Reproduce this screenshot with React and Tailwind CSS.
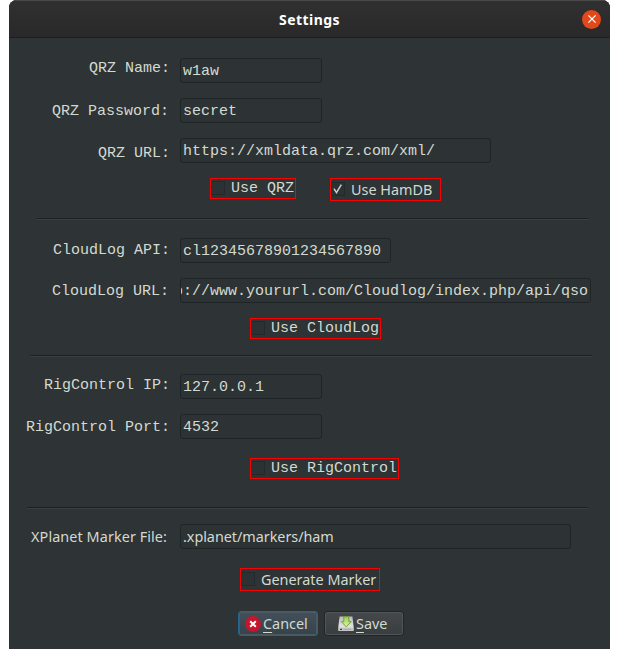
import React from 'react';

const MONO = "font-['Liberation_Mono',monospace] text-[15px] leading-[17px]";
const SANS = "font-['Noto_Sans',sans-serif] text-[14.4px] leading-[20px]";

function Row({ label, value, row, labelPos, labelFont = MONO, width, valuePos = 'pt-[4px] px-[2px]', valueFont = MONO, clipped = false }) {
  return (
    <div className={`flex h-[25px] items-start ${row}`}>
      <label className={`w-[161px] shrink-0 whitespace-nowrap text-right ${labelFont} ${labelPos}`}>{label}</label>
      <div className={`ml-[10px] flex h-[25px] shrink-0 overflow-hidden whitespace-nowrap rounded-[3px] border border-[#1f2426] bg-[#2d3335] ${clipped ? 'justify-end' : ''} ${width} ${valuePos} ${valueFont}`}>
        <span>{value}</span>
      </div>
    </div>
  );
}

function Check({ label, checked = false, box, font = MONO, boxPos = 'mt-[2px]' }) {
  return (
    <div className={`flex items-start border border-[#fa0000] ${box}`}>
      <span className={`flex h-[14px] w-[14px] shrink-0 items-center justify-center border border-[#24292b] bg-[#2c3234] ${boxPos}`}>
        {checked && (
          <svg viewBox="0 0 12 12" className="h-[12px] w-[12px]" fill="none" stroke="#c9d0cb" strokeWidth="1.5">
            <path d="M2 5.6 4.5 9.6 9.3 1.6" />
          </svg>
        )}
      </span>
      <span className={`ml-[6px] whitespace-nowrap pt-[1px] ${font}`}>{label}</span>
    </div>
  );
}

function Separator({ place }) {
  return <div className={`h-[2px] shrink-0 border-t border-b border-t-[#1d2123] border-b-[#3a4042] ${place}`} />;
}

function CancelIcon() {
  return (
    <svg viewBox="0 0 16 16" className="h-[16px] w-[16px] shrink-0">
      <circle cx="8" cy="8" r="7.9" fill="#c7162b" />
      <path d="M5.2 5.2 10.8 10.8M10.8 5.2 5.2 10.8" stroke="#fff" strokeWidth="2" />
    </svg>
  );
}

function SaveIcon() {
  return (
    <svg viewBox="0 0 16 16" className="h-[16px] w-[16px] shrink-0">
      <defs>
        <linearGradient id="disk" x1="0" y1="0" x2="0" y2="1">
          <stop offset="0" stopColor="#b9bbba" />
          <stop offset="1" stopColor="#f2f2f2" />
        </linearGradient>
        <linearGradient id="arrow" x1="0" y1="0" x2="0" y2="1">
          <stop offset="0" stopColor="#a3cf5c" />
          <stop offset="1" stopColor="#d9f2a8" />
        </linearGradient>
      </defs>
      <path d="M1.6 .6H14.4L15.6 10V14.2Q15.6 15 14.8 15H1.2Q.4 15 .4 14.2V10Z" fill="url(#disk)" />
      <path d="M.6 11.4H15.4V14.2Q15.4 14.9 14.7 14.9H1.3Q.6 14.9 .6 14.2Z" fill="#c4c5c4" />
      <path d="M2 13.3H4" stroke="#222" strokeWidth="1" />
      <path d="M5.5 13.3H13" stroke="#a5a7a5" strokeWidth="1" />
      <path d="M5.8 .8H10.8V5.6H13.2L8.3 10.9 3.4 5.6H5.8Z" fill="url(#arrow)" stroke="#6b9e25" strokeWidth=".9" />
    </svg>
  );
}

export default function App() {
  return (
    <div className="h-[658px] w-[619px] overflow-hidden bg-white px-[9px] text-[#d3dad0]">
      <div className="flex h-[649px] w-[601px] flex-col overflow-hidden rounded-t-[8px] bg-[#2e3335]">
        <header className="flex h-[38px] shrink-0 items-center border-b border-t border-b-[#1c1f20] border-t-[#494949] bg-[#2b2b2b] bg-linear-to-b from-[#303030] to-[#292929] pl-[28px] pr-[9px]">
          <h1 className="flex-1 pt-[1px] text-center font-['Noto_Sans',sans-serif] text-[14px] font-bold leading-[20px] tracking-[0.45px] text-white">
            Settings
          </h1>
          <button aria-label="Close" className="flex h-[19px] w-[19px] items-center justify-center rounded-full bg-[#e2481a]">
            <svg viewBox="0 0 10 10" className="h-[10px] w-[10px]" stroke="#fff" strokeWidth="1.3">
              <path d="M1.4 1.4 8.6 8.6M8.6 1.4 1.4 8.6" />
            </svg>
          </button>
        </header>

        <Row label="QRZ Name:" value="w1aw" row="mt-[20px]" labelPos="pt-[2px]" width="w-[142px]" />
        <Row label="QRZ Password:" value="secret" row="mt-[15px]" labelPos="pt-[5px] pr-[1px]" width="w-[142px]" />
        <Row label="QRZ URL:" value="https://xmldata.qrz.com/xml/" row="mt-[15px]" labelPos="pt-[7px]" width="w-[311px]" />
        <div className="mt-[15px] flex h-[23px] shrink-0 items-start gap-[34px] pl-[201px]">
          <Check label="Use QRZ" box="h-[21px] w-[86px]" />
          <Check label="Use HamDB" checked box="h-[23px] w-[111px]" font={SANS} boxPos="mt-[3px]" />
        </div>

        <Separator place="ml-[28px] mt-[17px] w-[551px]" />

        <Row label="CloudLog API:" value="cl12345678901234567890" row="mt-[18px]" labelPos="pt-[4px]" width="w-[211px]" />
        <Row
          label="CloudLog URL:"
          value="p://www.yoururl.com/Cloudlog/index.php/api/qso"
          row="mt-[15px]"
          labelPos="pt-[5px] pr-[1px]"
          width="w-[411px]"
          valuePos="pt-[4px] pr-[2px]"
          clipped
        />
        <div className="mt-[15px] flex pl-[241px]">
          <Check label="Use CloudLog" box="h-[21px] w-[131px]" />
        </div>

        <Separator place="ml-[21px] mt-[16px] w-[562px]" />

        <Row label="RigControl IP:" value="127.0.0.1" row="mt-[17px]" labelPos="pt-[3px]" width="w-[142px]" />
        <Row label="RigControl Port:" value="4532" row="mt-[15px]" labelPos="pt-[5px]" width="w-[142px]" />
        <div className="mt-[19px] flex pl-[241px]">
          <Check label="Use RigControl" box="h-[21px] w-[149px]" />
        </div>

        <Separator place="ml-[18px] mt-[28px] w-[561px]" />

        <Row
          label="XPlanet Marker File:"
          value=".xplanet/markers/ham"
          row="mt-[15px]"
          labelPos="pt-[3px] pr-[3px] tracking-[0.08px]"
          labelFont={SANS}
          width="w-[391px]"
          valuePos="pt-[2px] px-[2px] tracking-[-0.04px]"
          valueFont={SANS}
        />
        <div className="mt-[19px] flex pl-[231px]">
          <Check label="Generate Marker" box="h-[23px] w-[140px]" font={SANS} boxPos="mt-[3px]" />
        </div>

        <div className="mt-[20px] flex gap-[6px] pl-[229px]">
          <button className={`flex h-[25px] w-[80px] items-center rounded-[3px] border border-[#27648c] bg-linear-to-b from-[#43505a] to-[#37434b] pl-[6px] shadow-[inset_0_0_0_1px_#4b5963] ${SANS}`}>
            <CancelIcon />
            <span className="mt-[1px] ml-[2px]"><u className="underline-offset-[3px]">C</u>ancel</span>
          </button>
          <button className={`flex h-[25px] w-[80px] items-center rounded-[3px] border border-[#202526] bg-linear-to-b from-[#45494b] to-[#383d3f] pl-[13px] shadow-[inset_0_0_0_1px_#505557] ${SANS}`}>
            <SaveIcon />
            <span className="mt-[1px] ml-[2px]"><u className="underline-offset-[3px]">S</u>ave</span>
          </button>
        </div>
      </div>
    </div>
  );
}
